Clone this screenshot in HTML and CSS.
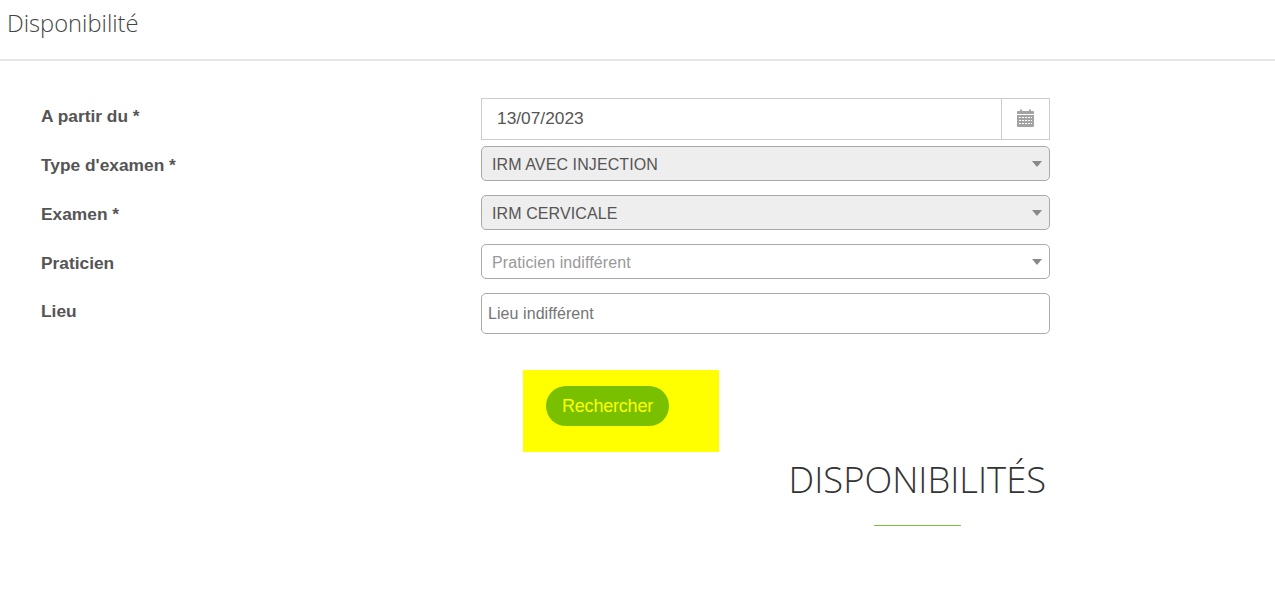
FILE: index.html
```html
<!DOCTYPE html>
<html lang="fr">
<head>
<meta charset="utf-8">
<title>Disponibilité</title>
<link rel="stylesheet" href="styles.css">
</head>
<body>
<header class="page-header"><h1 class="page-title">Disponibilité</h1></header>
<main class="content">
  <form class="form">
    <div class="row row-date">
      <label class="label">A partir du *</label>
      <div class="date-field">
        <span class="date-value">13/07/2023</span>
        <span class="date-addon">
          <svg class="cal-icon" width="17" height="18" viewBox="0 0 17 18" aria-hidden="true">
            <path d="M0 5V3A1 1 0 0 1 1 2H3V.5h2V2h7V.5h2V2h2a1 1 0 0 1 1 1V5z" fill="#a3a3a3"/>
            <path fill-rule="evenodd" fill="#a3a3a3" d="M0 6h17v11a1 1 0 0 1-1 1H1a1 1 0 0 1-1-1zM2 8v1h2V8zm3 0v1h2V8zm3 0v1h2V8zm3 0v1h2V8zm3 0v1h1V8zM2 11v1h2v-1zm3 0v1h2v-1zm3 0v1h2v-1zm3 0v1h2v-1zm3 0v1h1v-1zM2 14v1h2v-1zm3 0v1h2v-1zm3 0v1h2v-1zm3 0v1h2v-1zm3 0v1h1v-1z"/>
          </svg>
        </span>
      </div>
    </div>
    <div class="row row-select">
      <label class="label">Type d'examen *</label>
      <div class="select select-filled"><span>IRM AVEC INJECTION</span><i class="caret"></i></div>
    </div>
    <div class="row row-select">
      <label class="label">Examen *</label>
      <div class="select select-filled"><span>IRM CERVICALE</span><i class="caret"></i></div>
    </div>
    <div class="row row-select">
      <label class="label">Praticien</label>
      <div class="select select-empty"><span>Praticien indifférent</span><i class="caret"></i></div>
    </div>
    <div class="row row-input">
      <label class="label">Lieu</label>
      <div class="text-input">Lieu indifférent</div>
    </div>
    <div class="actions">
      <div class="highlight"><button type="button" class="search-btn">Rechercher</button></div>
    </div>
  </form>
  <section class="results">
    <div class="results-head">
      <h2 class="results-title">DISPONIBILITÉS</h2>
      <div class="results-rule"></div>
    </div>
  </section>
</main>
</body>
</html>
```
FILE: styles.css
```css
* { box-sizing: border-box; }
html, body { margin: 0; padding: 0; background: #fff; }
body { height: 608px; overflow: hidden; font-family: "Liberation Sans", Arial, sans-serif; color: #555; }

.page-header { height: 61px; border-bottom: 2px solid #e6e6e6; padding: 9px 0 0 7px; }
.page-title { margin: 0; font-family: "Open Sans", sans-serif; font-weight: 300; font-size: 23.7px; line-height: 28px; color: #444; }

.content { padding-top: 37px; }
.form { padding-left: 41px; }

.row { display: flex; align-items: flex-start; }
.label { width: 440px; flex: none; font-size: 17.33px; font-weight: 700; line-height: 20px; color: #555; padding-top: 8px; }
.row-date { height: 48px; }
.row-select { height: 49px; }
.row-input { height: 41px; }
.row-select .label { padding-top: 9px; }
.row-input .label { padding-top: 8px; }

.date-field { width: 569px; height: 42px; display: flex; border: 1px solid #ccc; }
.date-value { flex: 1; padding-left: 15px; font-size: 17.33px; line-height: 38px; color: #555; }
.date-addon { width: 48px; border-left: 1px solid #ccc; padding-bottom: 2px; display: flex; align-items: center; justify-content: center; }
.cal-icon { display: block; }

.select { width: 569px; height: 35px; display: flex; align-items: center; justify-content: space-between; padding: 2px 7px 0 10px; border: 1px solid #aaa; border-radius: 5px; font-size: 16px; letter-spacing: 0.1px; }
.select-filled { background: #eee; color: #555; }
.select-empty { background: #fff; color: #999; }
.caret { width: 0; height: 0; margin-top: -2px; border-left: 5px solid transparent; border-right: 5px solid transparent; border-top: 6px solid #888; }

.text-input { width: 569px; height: 41px; padding-left: 6px; border: 1px solid #aaa; border-radius: 5px; font-size: 16px; letter-spacing: 0.07px; line-height: 39px; color: #757575; }

.actions { margin-top: 36px; padding-left: 482px; }
.highlight { width: 196px; height: 82px; background: #ff0; padding: 16px 0 0 23px; }
.search-btn { display: block; width: 123px; height: 40px; padding: 0; border: 0; border-radius: 20px; background: #78c000; color: #ff0; font-family: "Liberation Sans", Arial, sans-serif; font-size: 18px; letter-spacing: -0.2px; }

.results { display: flex; justify-content: flex-end; padding-right: 229px; }
.results-head { display: flex; flex-direction: column; align-items: center; margin-top: 5px; }
.results-title { margin: 0; font-family: "Open Sans", sans-serif; font-weight: 300; font-size: 36.3px; line-height: 44px; color: #333; white-space: nowrap; }
.results-rule { width: 87px; height: 1px; background: #7ac143; margin-top: 24px; }
```
